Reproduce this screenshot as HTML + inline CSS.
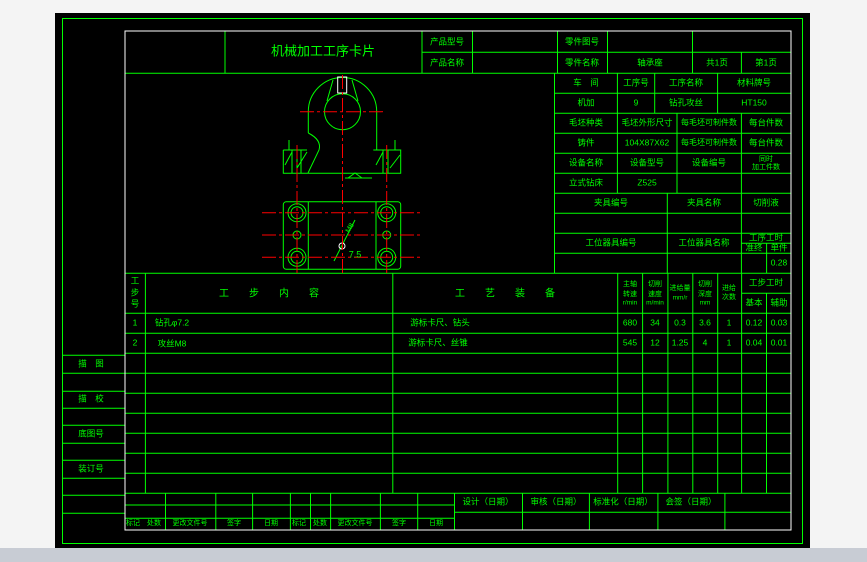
<!DOCTYPE html>
<html><head><meta charset="utf-8"><style>
html,body{margin:0;padding:0;width:867px;height:562px;overflow:hidden;background:#f4f4f4}
svg{position:absolute;left:0;top:0}
text{font-family:"Liberation Sans","Noto Sans CJK SC",sans-serif;fill:#00ff00;font-size:8.5px;text-anchor:middle;dominant-baseline:middle}
</style></head><body>
<svg width="867" height="562" viewBox="0 0 867 562">
<rect x="0" y="0" width="867" height="13" fill="#f4f4f4"/>
<rect x="55" y="13" width="755" height="535" fill="#000"/>
<rect x="0" y="548" width="867" height="14" fill="#c8ccd4"/>
<rect x="62.5" y="18.5" width="740" height="525" fill="none" stroke="#00ff00" stroke-width="1"/>
<g stroke="#00ff00" stroke-width="1" fill="none">
<!-- header -->
<line x1="125" y1="73.3" x2="791" y2="73.3"/>
<line x1="422" y1="52.3" x2="791" y2="52.3"/>
<line x1="225" y1="31" x2="225" y2="73.3"/>
<line x1="422" y1="31" x2="422" y2="73.3"/>
<line x1="472.5" y1="31" x2="472.5" y2="73.3"/>
<line x1="557.5" y1="31" x2="557.5" y2="73.3"/>
<line x1="607.5" y1="31" x2="607.5" y2="73.3"/>
<line x1="692.5" y1="31" x2="692.5" y2="73.3"/>
<line x1="741.4" y1="52.3" x2="741.4" y2="73.3"/>
<!-- right table -->
<line x1="554.5" y1="73.3" x2="554.5" y2="273.3"/>
<line x1="554.5" y1="93.3" x2="791" y2="93.3"/>
<line x1="554.5" y1="113.3" x2="791" y2="113.3"/>
<line x1="554.5" y1="133.3" x2="791" y2="133.3"/>
<line x1="554.5" y1="153.3" x2="791" y2="153.3"/>
<line x1="554.5" y1="173.3" x2="791" y2="173.3"/>
<line x1="554.5" y1="193.3" x2="791" y2="193.3"/>
<line x1="554.5" y1="213.3" x2="791" y2="213.3"/>
<line x1="554.5" y1="233.3" x2="791" y2="233.3"/>
<line x1="741.4" y1="243.3" x2="791" y2="243.3"/>
<line x1="554.5" y1="253.3" x2="791" y2="253.3"/>
<line x1="617.4" y1="73.3" x2="617.4" y2="193.3"/>
<line x1="654.7" y1="73.3" x2="654.7" y2="113.3"/>
<line x1="717.6" y1="73.3" x2="717.6" y2="113.3"/>
<line x1="677" y1="113.3" x2="677" y2="193.3"/>
<line x1="741.4" y1="113.3" x2="741.4" y2="193.3"/>
<line x1="667.3" y1="193.3" x2="667.3" y2="273.3"/>
<line x1="741.4" y1="193.3" x2="741.4" y2="273.3"/>
<line x1="766.6" y1="243.3" x2="766.6" y2="273.3"/>
<!-- process table -->
<line x1="125" y1="273.3" x2="791" y2="273.3"/>
<line x1="741.6" y1="293.3" x2="791" y2="293.3"/>
<line x1="125" y1="313.3" x2="791" y2="313.3"/>
<line x1="125" y1="333.3" x2="791" y2="333.3"/>
<line x1="125" y1="353.3" x2="791" y2="353.3"/>
<line x1="125" y1="373.3" x2="791" y2="373.3"/>
<line x1="125" y1="393.3" x2="791" y2="393.3"/>
<line x1="125" y1="413.3" x2="791" y2="413.3"/>
<line x1="125" y1="433.3" x2="791" y2="433.3"/>
<line x1="125" y1="453.3" x2="791" y2="453.3"/>
<line x1="125" y1="473.3" x2="791" y2="473.3"/>
<line x1="125" y1="493.3" x2="791" y2="493.3"/>
<line x1="145.4" y1="273.3" x2="145.4" y2="493.3"/>
<line x1="392.8" y1="273.3" x2="392.8" y2="493.3"/>
<line x1="617.7" y1="273.3" x2="617.7" y2="493.3"/>
<line x1="642.6" y1="273.3" x2="642.6" y2="493.3"/>
<line x1="667.9" y1="273.3" x2="667.9" y2="493.3"/>
<line x1="692.8" y1="273.3" x2="692.8" y2="493.3"/>
<line x1="717.7" y1="273.3" x2="717.7" y2="493.3"/>
<line x1="741.6" y1="273.3" x2="741.6" y2="493.3"/>
<line x1="766.5" y1="293.3" x2="766.5" y2="493.3"/>
<!-- bottom sign rows -->
<line x1="125" y1="505" x2="454.5" y2="505"/>
<line x1="125" y1="518.3" x2="454.5" y2="518.3"/>
<line x1="454.5" y1="512.3" x2="791" y2="512.3"/>
<line x1="165.5" y1="493.3" x2="165.5" y2="530"/>
<line x1="215.8" y1="493.3" x2="215.8" y2="530"/>
<line x1="252.6" y1="493.3" x2="252.6" y2="530"/>
<line x1="290.4" y1="493.3" x2="290.4" y2="530"/>
<line x1="310.5" y1="493.3" x2="310.5" y2="530"/>
<line x1="330.6" y1="493.3" x2="330.6" y2="530"/>
<line x1="380.4" y1="493.3" x2="380.4" y2="530"/>
<line x1="417.7" y1="493.3" x2="417.7" y2="530"/>
<line x1="454.5" y1="493.3" x2="454.5" y2="530"/>
<line x1="522.5" y1="493.3" x2="522.5" y2="530"/>
<line x1="589.4" y1="493.3" x2="589.4" y2="530"/>
<line x1="657.9" y1="493.3" x2="657.9" y2="530"/>
<line x1="724.9" y1="493.3" x2="724.9" y2="530"/>
<!-- left strip -->
<line x1="63" y1="355.3" x2="125" y2="355.3"/>
<line x1="63" y1="373.3" x2="125" y2="373.3"/>
<line x1="63" y1="391.3" x2="125" y2="391.3"/>
<line x1="63" y1="408.3" x2="125" y2="408.3"/>
<line x1="63" y1="425.3" x2="125" y2="425.3"/>
<line x1="63" y1="443.3" x2="125" y2="443.3"/>
<line x1="63" y1="460.3" x2="125" y2="460.3"/>
<line x1="63" y1="478.3" x2="125" y2="478.3"/>
<line x1="63" y1="495.3" x2="125" y2="495.3"/>
<line x1="63" y1="513.3" x2="125" y2="513.3"/>
<!-- drawing -->
<path d="M308.3 133 L308.3 111.7 A34.2 34.2 0 0 1 376.7 111.7 L376.7 150"/>
<circle cx="342.5" cy="111.7" r="18"/>
<path d="M308.3 133 Q322 140 319 150 L308 173"/>
<path d="M283.3 150 L307 150 M373.3 150 L400.7 150 L400.7 173.3 L283.3 173.3 L283.3 150"/>
<path d="M292 150 L292 173 M297 150 L297 173 M301 150 L301 173 M383 150 L383 173 M388 150 L388 173 M285 165 L292 152 M297 168 L307 152 M376 165 L383 152 M390 168 L400 155"/>
<path d="M289 150 L289 140 M395 150 L395 140"/>
<path d="M327 101 L333 80 M358 101 L352 80"/>
<path d="M348 178 L355 173 L362 178 M345 178 L372 178"/>
<rect x="283.3" y="201.7" width="117.4" height="67.6" rx="3"/>
<line x1="308.3" y1="201.7" x2="308.3" y2="269.3"/>
<line x1="376" y1="201.7" x2="376" y2="269.3"/>
<circle cx="297" cy="212.7" r="9"/><circle cx="297" cy="212.7" r="6"/>
<circle cx="297" cy="257.3" r="9"/><circle cx="297" cy="257.3" r="6"/>
<circle cx="386.7" cy="212.7" r="9"/><circle cx="386.7" cy="212.7" r="6"/>
<circle cx="386.7" cy="257.3" r="9"/><circle cx="386.7" cy="257.3" r="6"/>
<circle cx="297" cy="235" r="4"/><circle cx="386.7" cy="235" r="4"/>
<path d="M334 261 L355 220"/>
</g>
<rect x="337.7" y="77" width="9" height="16" fill="none" stroke="#fff"/>
<circle cx="342" cy="246" r="3" fill="none" stroke="#fff"/>
<rect x="125" y="31" width="666" height="499" fill="none" stroke="#fff" stroke-width="1"/>
<g stroke="#ff0000" stroke-width="1" stroke-dasharray="14 3 3 3">
<line x1="300" y1="111.7" x2="385" y2="111.7"/>
<line x1="342.5" y1="75" x2="342.5" y2="273"/>
<line x1="297" y1="145" x2="297" y2="273"/>
<line x1="386.7" y1="145" x2="386.7" y2="273"/>
<line x1="262" y1="212.7" x2="423" y2="212.7"/>
<line x1="262" y1="235" x2="423" y2="235"/>
<line x1="262" y1="257.3" x2="423" y2="257.3"/>
</g>
<text x="323" y="52" style="font-size:13px">机械加工工序卡片</text>
<text x="447" y="42">产品型号</text><text x="447" y="63">产品名称</text>
<text x="582" y="42">零件图号</text><text x="582" y="63">零件名称</text>
<text x="650" y="63">轴承座</text><text x="717" y="63">共1页</text><text x="766" y="63">第1页</text>
<text x="586" y="83">车　间</text><text x="636" y="83">工序号</text><text x="686" y="83">工序名称</text><text x="754" y="83">材料牌号</text>
<text x="586" y="103">机加</text><text x="636" y="103">9</text><text x="686" y="103">钻孔攻丝</text><text x="754" y="103">HT150</text>
<text x="586" y="123">毛坯种类</text><text x="647" y="123">毛坯外形尺寸</text><text x="709" y="123" style="font-size:8px">每毛坯可制件数</text><text x="766" y="123">每台件数</text>
<text x="586" y="143">铸件</text><text x="647" y="143">104X87X62</text><text x="709" y="143" style="font-size:8px">每毛坯可制件数</text><text x="766" y="143">每台件数</text>
<text x="586" y="163">设备名称</text><text x="647" y="163">设备型号</text><text x="709" y="163">设备编号</text>
<text x="766" y="159" style="font-size:7px">同时</text><text x="766" y="167" style="font-size:7px">加工件数</text>
<text x="586" y="183">立式钻床</text><text x="647" y="183">Z525</text>
<text x="611" y="203">夹具编号</text><text x="704" y="203">夹具名称</text><text x="766" y="203">切削液</text>
<text x="611" y="243">工位器具编号</text><text x="704" y="243">工位器具名称</text>
<text x="766" y="238">工序工时</text><text x="754" y="248">准终</text><text x="779" y="248">单件</text>
<text x="779" y="263">0.28</text>
<text x="135" y="281">工</text><text x="135" y="293">步</text><text x="135" y="304">号</text>
<text x="269" y="294" style="font-size:10px">工　　步　　内　　容</text>
<text x="505" y="294" style="font-size:10px">工　　艺　　装　　备</text>
<text x="630" y="284" style="font-size:7px">主轴</text><text x="630" y="294" style="font-size:7px">转速</text><text x="630" y="303" style="font-size:6.5px">r/min</text>
<text x="655" y="284" style="font-size:7px">切削</text><text x="655" y="294" style="font-size:7px">速度</text><text x="655" y="303" style="font-size:6.5px">m/min</text>
<text x="680" y="288" style="font-size:7px">进给量</text><text x="680" y="298" style="font-size:6.5px">mm/r</text>
<text x="705" y="284" style="font-size:7px">切削</text><text x="705" y="294" style="font-size:7px">深度</text><text x="705" y="303" style="font-size:6.5px">mm</text>
<text x="729" y="288" style="font-size:7px">进给</text><text x="729" y="297" style="font-size:7px">次数</text>
<text x="766" y="283">工步工时</text><text x="754" y="303">基本</text><text x="779" y="303">辅助</text>
<text x="135" y="323">1</text><text x="172" y="323">钻孔φ7.2</text><text x="440" y="323">游标卡尺、钻头</text>
<text x="630" y="323">680</text><text x="655" y="323">34</text><text x="680" y="323">0.3</text><text x="705" y="323">3.6</text><text x="729" y="323">1</text><text x="754" y="323">0.12</text><text x="779" y="323">0.03</text>
<text x="135" y="343">2</text><text x="172" y="344">攻丝M8</text><text x="438" y="343">游标卡尺、丝锥</text>
<text x="630" y="343">545</text><text x="655" y="343">12</text><text x="680" y="343">1.25</text><text x="705" y="343">4</text><text x="729" y="343">1</text><text x="754" y="343">0.04</text><text x="779" y="343">0.01</text>
<text x="91" y="364">描　图</text><text x="91" y="399">描　校</text><text x="91" y="434">底图号</text><text x="91" y="469">装订号</text>
<text x="488" y="502">设计（日期）</text><text x="556" y="502">审核（日期）</text><text x="623" y="502">标准化（日期）</text><text x="691" y="502">会签（日期）</text>
<g style="font-size:7px">
<text x="133" y="523" style="font-size:7px">标记</text><text x="154" y="523" style="font-size:7px">处数</text><text x="190" y="523" style="font-size:7px">更改文件号</text><text x="234" y="523" style="font-size:7px">签字</text><text x="271" y="523" style="font-size:7px">日期</text>
<text x="299" y="523" style="font-size:7px">标记</text><text x="320" y="523" style="font-size:7px">处数</text><text x="355" y="523" style="font-size:7px">更改文件号</text><text x="399" y="523" style="font-size:7px">签字</text><text x="436" y="523" style="font-size:7px">日期</text>
</g>
<text x="350" y="228" style="font-size:7px" transform="rotate(-60 350 228)">M8</text>
<text x="355" y="255" style="font-size:9px">7.5</text>
</svg>
</body></html>
